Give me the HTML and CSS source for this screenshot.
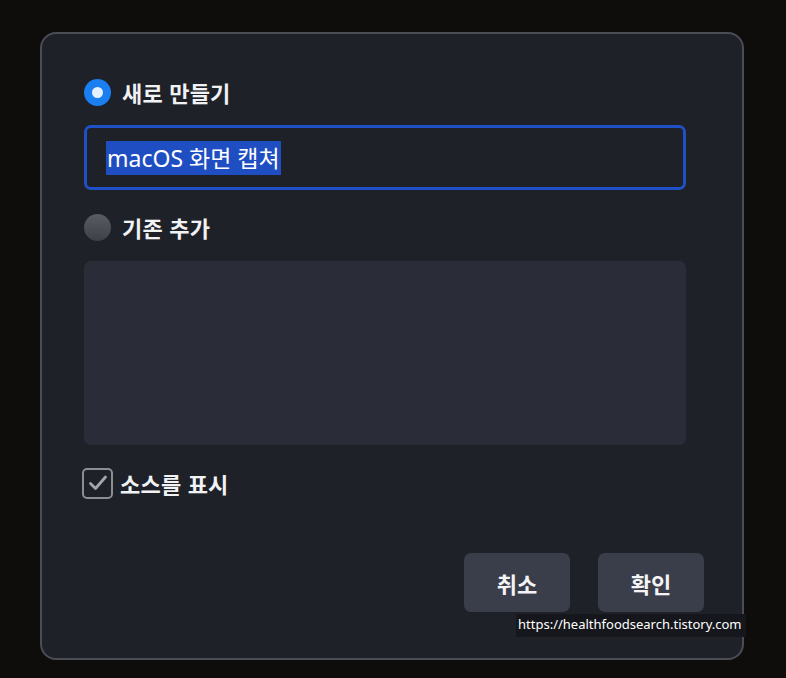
FILE: index.html
```html
<!DOCTYPE html>
<html lang="ko">
<head>
<meta charset="utf-8">
<link rel="stylesheet" href="styles.css">
</head>
<body>
<div class="dialog">
  <label class="option">
    <span class="radio radio-on"><span class="dot"></span></span>
    <span class="label">새로 만들기</span>
  </label>
  <div class="field"><span class="sel">macOS 화면 캡쳐</span></div>
  <label class="option">
    <span class="radio radio-off"></span>
    <span class="label">기존 추가</span>
  </label>
  <div class="list"></div>
  <label class="check-row">
    <span class="checkbox">
      <svg width="22" height="22" viewBox="0 0 22 22"><path d="M3.5 11.5 L8.5 16.5 L18.5 5" fill="none" stroke="#a3a5ab" stroke-width="2.8" stroke-linecap="round" stroke-linejoin="round"/></svg>
    </span>
    <span class="label">소스를 표시</span>
  </label>
  <div class="buttons">
    <button class="btn">취소</button>
    <button class="btn">확인</button>
  </div>
  <div class="watermark">https://healthfoodsearch.tistory.com</div>
</div>
</body>
</html>
```
FILE: styles.css
```css
html, body {
  margin: 0;
  padding: 0;
  background: #0e0d0b;
  width: 786px;
  height: 678px;
  overflow: hidden;
  font-family: "Noto Sans CJK KR", "Noto Sans", sans-serif;
}
.dialog {
  position: relative;
  box-sizing: border-box;
  margin: 32px 0 0 40px;
  width: 704px;
  height: 628px;
  background: #1f2129;
  border: 2px solid #4b4d55;
  border-radius: 16px;
  padding: 40px 56px 0 42px;
  display: flex;
  flex-direction: column;
  color: #f1f2f4;
}
.option {
  display: flex;
  align-items: center;
  gap: 11px;
  height: 36px;
}
.label {
  font-size: 22px;
  font-weight: 600;
  letter-spacing: 0.2px;
}
.radio {
  width: 27px;
  height: 27px;
  border-radius: 50%;
  display: flex;
  align-items: center;
  justify-content: center;
  box-sizing: border-box;
}
.radio-on {
  background: #1a7ff0;
}
.dot {
  width: 11px;
  height: 11px;
  border-radius: 50%;
  background: #e6f1ff;
}
.radio-off {
  background: linear-gradient(#5a5c63, #3e4047);
}
.field {
  box-sizing: border-box;
  margin-top: 15px;
  height: 65px;
  border: 3px solid #1f50c6;
  border-radius: 7px;
  padding: 0 0 0 19px;
  display: flex;
  align-items: center;
}
.sel {
  background: #1f4ec3;
  color: #ffffff;
  font-family: "Noto Sans", "Noto Sans CJK KR", sans-serif;
  font-size: 23px;
  line-height: 34px;
  padding: 0 1px 0 1px;
}
.field + .option {
  margin-top: 19px;
}
.list {
  margin-top: 16px;
  height: 184px;
  background: #2a2d38;
  border-radius: 7px;
}
.check-row {
  display: flex;
  align-items: center;
  gap: 7px;
  margin-top: 22px;
  margin-left: -2px;
  height: 32px;
}
.checkbox {
  box-sizing: border-box;
  width: 31px;
  height: 31px;
  border: 2.5px solid #8c8e95;
  border-radius: 5px;
  display: flex;
  align-items: center;
  justify-content: center;
}
.buttons {
  display: flex;
  justify-content: flex-end;
  gap: 28px;
  margin-top: 54px;
  margin-right: -18px;
}
.btn {
  width: 106px;
  height: 59px;
  border: none;
  border-radius: 7px;
  background: #3a3d4a;
  color: #f4f4f6;
  font-family: "Noto Sans CJK KR", sans-serif;
  font-size: 22px;
  font-weight: 600;
  padding: 0;
}
.watermark {
  position: absolute;
  left: 474px;
  top: 580px;
  width: 230px;
  height: 23px;
  background: #16171c;
  color: #ffffff;
  font-family: "Noto Sans", sans-serif;
  font-size: 13px;
  line-height: 20px;
  padding-left: 2px;
  box-sizing: border-box;
}
```
